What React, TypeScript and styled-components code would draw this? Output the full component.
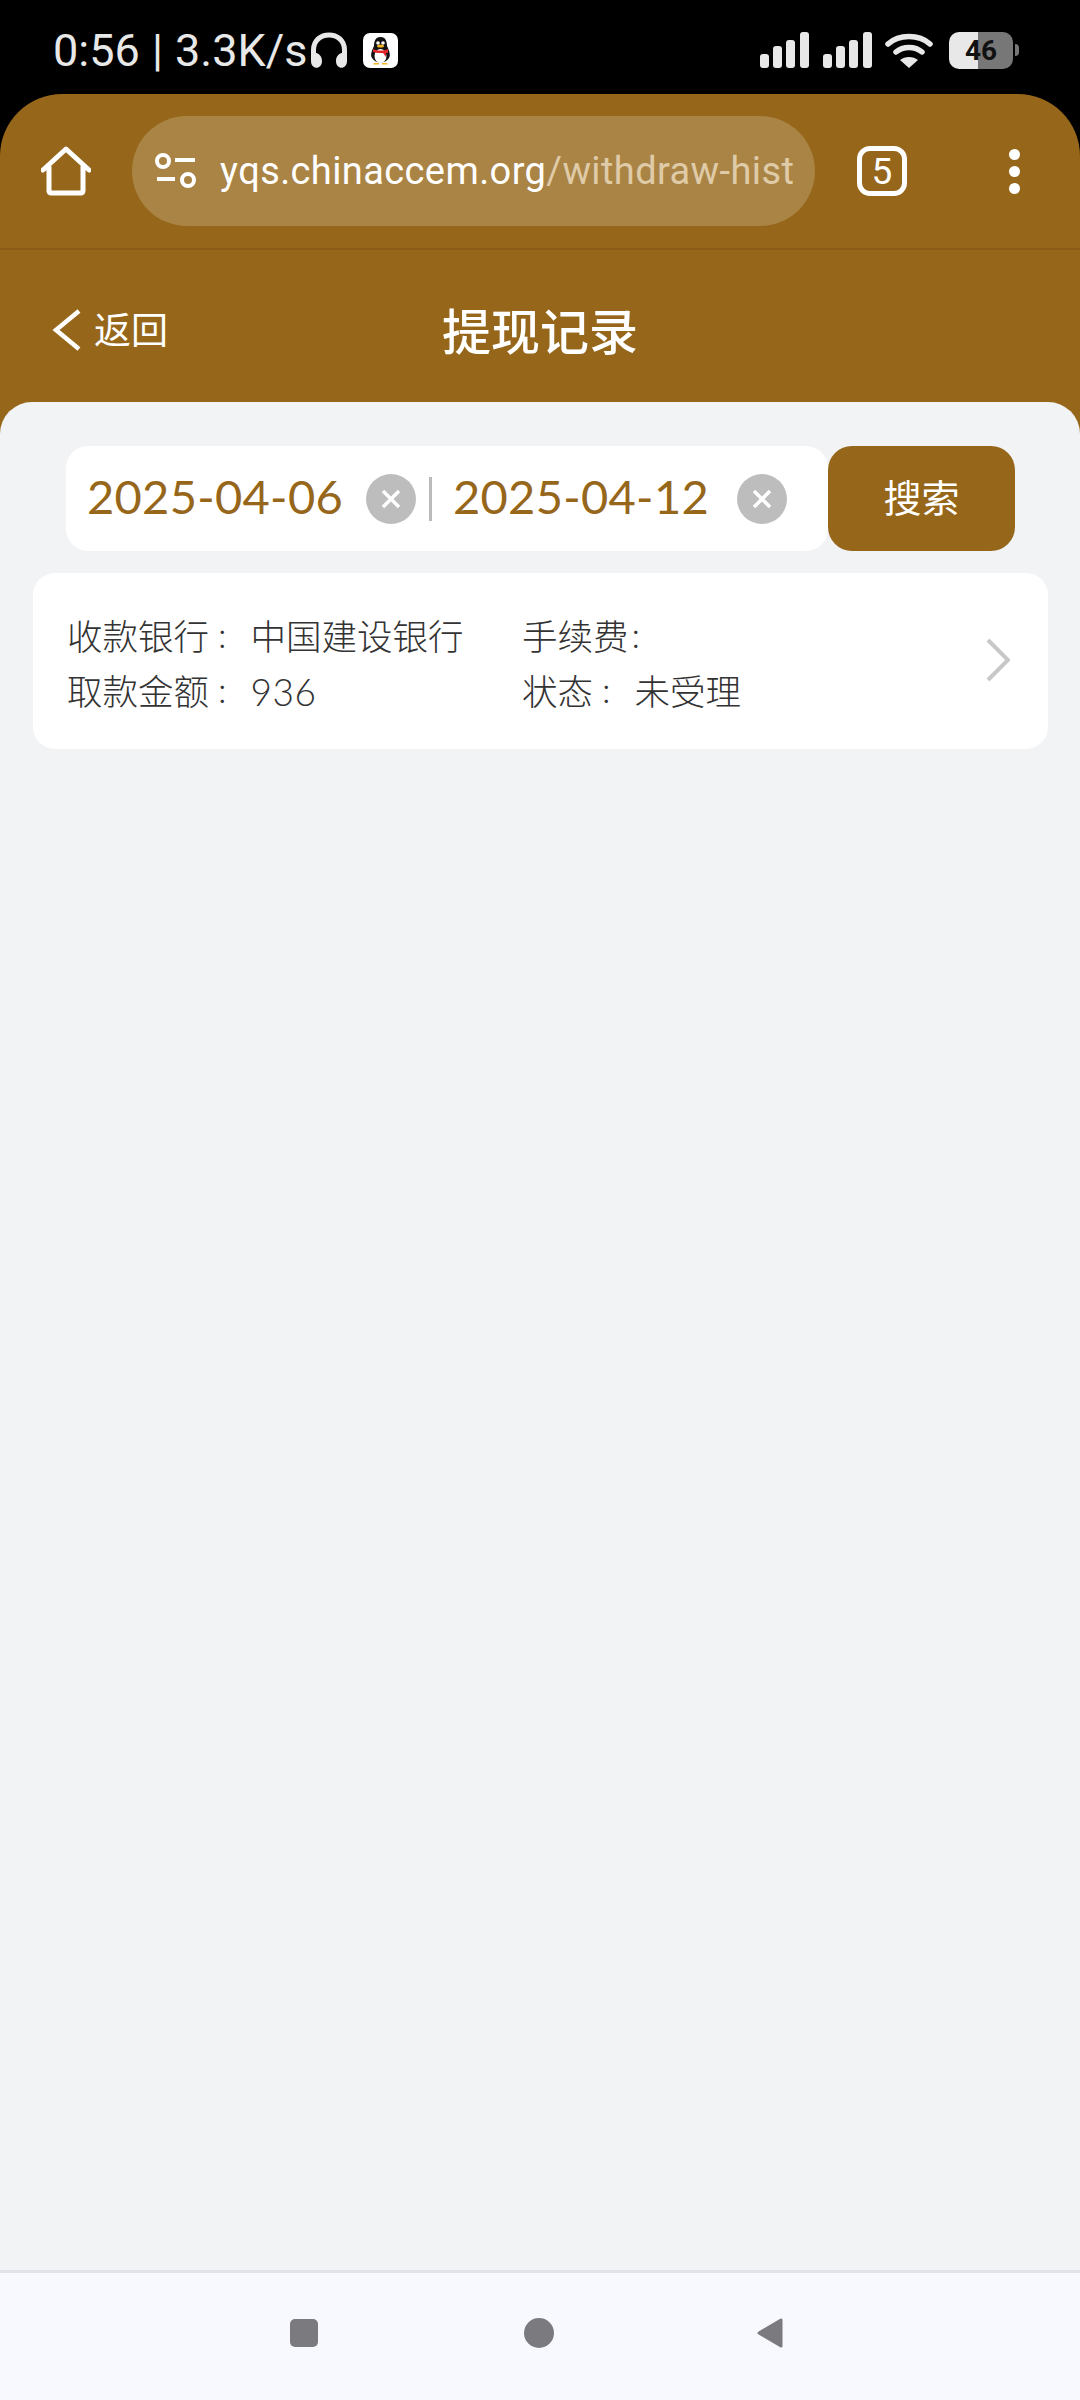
import React from "react";
import styled, { createGlobalStyle } from "styled-components";

const brown = "#96661a";
const latin = `Lato, "Noto Sans CJK SC", sans-serif`;

const GlobalStyle = createGlobalStyle`
  html, body { margin: 0; padding: 0; background: #000; }
  * { box-sizing: border-box; }
`;

const Screen = styled.div`
  width: 1080px;
  height: 2400px;
  display: flex;
  flex-direction: column;
  background: #000;
  overflow: hidden;
  font-family: ${latin};
`;

const StatusBar = styled.div`
  height: 94px;
  flex: none;
  display: flex;
  align-items: center;
  padding: 6px 61px 0 53px;
  color: #e8e8e8;
`;

const StatusText = styled.span`
  font-family: Roboto, sans-serif;
  font-size: 45px;
  line-height: 1;
  word-spacing: 1px;
`;

const StatusLeft = styled.div`
  display: flex;
  align-items: center;
  gap: 2px;
  flex: 1;
`;

const StatusRight = styled.div`
  display: flex;
  align-items: center;
`;

const QQBadge = styled.svg`
  margin-left: 13px;
`;

const Battery = styled.div`
  margin-left: 16px;
  width: 64px;
  height: 37px;
  border-radius: 10px;
  overflow: hidden;
  background: linear-gradient(90deg, #e8e8e8 0 29px, #777 29px 64px);
  color: #111;
  font: 700 28px/37px Roboto, sans-serif;
  text-align: center;
`;

const BatteryTip = styled.div`
  width: 4px;
  height: 12px;
  margin-left: 2px;
  border-radius: 0 4px 4px 0;
  background: #777;
`;

const Browser = styled.div`
  flex: 1;
  display: flex;
  flex-direction: column;
  background: ${brown};
  border-radius: 62px 62px 0 0;
  overflow: hidden;
`;

const ToolBar = styled.div`
  height: 156px;
  flex: none;
  display: flex;
  align-items: center;
  padding: 0 52px 0 41px;
  border-bottom: 2px solid #8a5c15;
`;

const UrlPill = styled.div`
  width: 683px;
  height: 110px;
  margin: 0 42px 0 41px;
  padding: 0 20px 0 23px;
  border-radius: 55px;
  background: #aa8445;
  display: flex;
  align-items: center;
  gap: 23px;
  white-space: nowrap;
  font-family: Roboto, sans-serif;
  font-size: 38px;
  letter-spacing: 0.4px;
  color: #fff;
`;

const UrlPath = styled.span`
  color: #dfcba8;
`;

const TabCount = styled.div`
  width: 50px;
  height: 50px;
  border: 5px solid #fff;
  border-radius: 13px;
  color: #fff;
  display: flex;
  align-items: center;
  justify-content: center;
  font: 400 37px/1 Roboto, sans-serif;
`;

const MoreDots = styled.div`
  margin-left: auto;
  display: flex;
  flex-direction: column;
  gap: 6px;
  margin-right: 8px;
`;

const Dot = styled.span`
  width: 11px;
  height: 11px;
  border-radius: 50%;
  background: #fff;
`;

const PageHeader = styled.div`
  height: 152px;
  flex: none;
  position: relative;
  display: flex;
  align-items: center;
  justify-content: center;
  color: #fff;
  padding-top: 10px;
`;

const BackLink = styled.div`
  position: absolute;
  left: 52px;
  top: 59px;
  display: flex;
  align-items: center;
  gap: 12px;
  font-size: 37px;
  line-height: 42px;
`;

const Title = styled.h1`
  margin: 0;
  font-size: 49px;
  font-weight: 500;
  line-height: 60px;
`;

const Content = styled.div`
  flex: 1;
  background: #f2f3f5;
  border-radius: 32px 32px 0 0;
  padding-top: 44px;
`;

const SearchRow = styled.div`
  display: flex;
  height: 105px;
  margin: 0 66px;
`;

const DateBox = styled.div`
  width: 762px;
  flex: none;
  display: flex;
  align-items: center;
  background: #fff;
  border-radius: 22px;
  padding-left: 21px;
`;

const DateText = styled.span<{ $width: number }>`
  width: ${(p) => p.$width}px;
  padding-bottom: 6px;
  color: ${brown};
  font-size: 47px;
  letter-spacing: 0.3px;
  white-space: nowrap;
`;

const ClearButton = styled.span`
  width: 50px;
  height: 50px;
  flex: none;
  border-radius: 50%;
  background: #bdbdbd;
  display: flex;
  align-items: center;
  justify-content: center;
`;

const Divider = styled.span`
  width: 3px;
  height: 44px;
  margin: 0 21px 0 13px;
  background: #bbb;
`;

const SearchButton = styled.div`
  width: 187px;
  flex: none;
  padding-bottom: 6px;
  background: ${brown};
  border-radius: 24px;
  color: #fff;
  font-size: 38px;
  display: flex;
  align-items: center;
  justify-content: center;
`;

const RecordCard = styled.div`
  margin: 22px 32px 0 33px;
  height: 176px;
  padding: 34px 38px 0 34px;
  background: #fff;
  border-radius: 22px;
  display: flex;
  align-items: flex-start;
`;

const Fields = styled.div`
  flex: 1;
  display: grid;
  grid-template-columns: 455px 1fr;
  grid-auto-rows: 55px;
  font-size: 35.5px;
  font-weight: 300;
  color: #333;
`;

const Field = styled.div`
  display: flex;
  align-items: center;
  white-space: nowrap;
`;

const FieldLabel = styled.span``;

const FieldColon = styled.span<{ $tight?: boolean }>`
  margin-left: ${(p) => (p.$tight ? 3 : 9)}px;
`;

const FieldValue = styled.span`
  margin-left: 24px;
`;

const FieldNumber = styled(FieldValue)`
  padding-top: 3px;
  font-size: 37px;
  letter-spacing: 0.5px;
`;

const Chevron = styled.svg`
  margin-top: 31px;
`;

const NavBar = styled.div`
  height: 130px;
  flex: none;
  background: #f8f9fe;
  border-top: 3px solid #e2e3e8;
  display: flex;
  align-items: center;
  justify-content: center;
  gap: 206px;
  padding: 0 7px 8px 0;
`;

const NavSquare = styled.div`
  width: 28px;
  height: 28px;
  border-radius: 5px;
  background: #7b7b7f;
`;

const NavCircle = styled.div`
  width: 30px;
  height: 30px;
  border-radius: 50%;
  background: #7b7b7f;
`;

const NavBack = styled.svg`
  margin-left: -3px;
`;

function ClearIcon() {
    return (
        <ClearButton>
            <svg width="22" height="22" viewBox="0 0 22 22">
                <path d="M3 3 L19 19 M19 3 L3 19" stroke="#fff" strokeWidth="3.5"/>
            </svg>
        </ClearButton>
    );
}

function SignalIcon({ left }: { left: number }) {
    return (
        <svg width="49" height="36" viewBox="0 0 49 36" style={{ marginLeft: left }} fill="#e8e8e8">
            <rect x="0" y="22" width="9" height="14" rx="3"/>
            <rect x="13" y="14" width="9" height="22" rx="3"/>
            <rect x="26" y="8" width="9" height="28" rx="3"/>
            <rect x="40" y="0" width="9" height="36" rx="3"/>
        </svg>
    );
}

function App() {
    return (
        <Screen>
            <GlobalStyle/>
            <StatusBar>
                <StatusLeft>
                    <StatusText>0:56 | 3.3K/s</StatusText>
                    <svg width="38" height="36" viewBox="0 0 38 36">
                        <path d="M3.5 25 V18 C3.5 -2 34.5 -2 34.5 18 V25" fill="none" stroke="#e8e8e8" strokeWidth="5"/>
                        <path d="M1 21 C7 19 12 23 12 29 C12 38 1 38 1 29 Z M37 21 C31 19 26 23 26 29 C26 38 37 38 37 29 Z" fill="#e8e8e8"/>
                    </svg>
                    <QQBadge width="35" height="35" viewBox="0 0 35 35">
                        <rect width="35" height="35" rx="7" fill="#fff"/>
                        <path d="M17.5 4 C12 4 11 9 11 13 C9 17 7 22 9 25 C13 31 22 31 26 25 C28 22 26 17 24 13 C24 9 23 4 17.5 4 Z" fill="#111"/>
                        <ellipse cx="17.5" cy="23" rx="6" ry="7" fill="#fff"/>
                        <circle cx="15" cy="10" r="1.8" fill="#fff"/>
                        <circle cx="20" cy="10" r="1.8" fill="#fff"/>
                        <ellipse cx="17.5" cy="13" rx="3.5" ry="1.6" fill="#f5b51e"/>
                        <path d="M10 16 C14 18 21 18 25 16 L25 20 L23 20 L23 24 L20 20 C16 20 13 20 10 19 Z" fill="#e5242a"/>
                        <path d="M11 30 H16 V31.5 H10 Z M19 30 H24 L25 31.5 H19 Z" fill="#f5b51e"/>
                    </QQBadge>
                </StatusLeft>
                <StatusRight>
                    <SignalIcon left={0}/>
                    <SignalIcon left={14}/>
                    <svg width="48" height="36" viewBox="0 0 48 36" style={{ marginLeft: 13 }}>
                        <path d="M3 12 C14 2 34 2 45 12 M11 20 C18 14 30 14 37 20" fill="none" stroke="#e8e8e8" strokeWidth="5.5" strokeLinecap="round"/>
                        <path d="M24 36 L15 28 C20 24 28 24 33 28 Z" fill="#e8e8e8"/>
                    </svg>
                    <Battery>46</Battery>
                    <BatteryTip/>
                </StatusRight>
            </StatusBar>
            <Browser>
                <ToolBar>
                    <svg width="50" height="50" viewBox="0 0 50 50">
                        <path d="M2 24 L25 3 L48 24 M8 21 V45 A2 2 0 0 0 10 47 H40 A2 2 0 0 0 42 45 V21" fill="none" stroke="#fff" strokeWidth="5" strokeLinecap="round" strokeLinejoin="round"/>
                    </svg>
                    <UrlPill>
                        <svg width="42" height="36" viewBox="0 0 42 36">
                            <circle cx="8" cy="8" r="6" fill="none" stroke="#fff" strokeWidth="4"/>
                            <path d="M20 7 H40 M2 26 H20" stroke="#fff" strokeWidth="4"/>
                            <circle cx="33" cy="27" r="6" fill="none" stroke="#fff" strokeWidth="4"/>
                        </svg>
                        <span>yqs.chinaccem.org<UrlPath>/withdraw-hist</UrlPath></span>
                    </UrlPill>
                    <TabCount>5</TabCount>
                    <MoreDots><Dot/><Dot/><Dot/></MoreDots>
                </ToolBar>
                <PageHeader>
                    <BackLink>
                        <svg width="30" height="42" viewBox="0 0 30 42">
                            <path d="M27 2 L4 21 L27 40" fill="none" stroke="#fff" strokeWidth="4.5"/>
                        </svg>
                        返回
                    </BackLink>
                    <Title>提现记录</Title>
                </PageHeader>
                <Content>
                    <SearchRow>
                        <DateBox>
                            <DateText $width={279}>2025-04-06</DateText>
                            <ClearIcon/>
                            <Divider/>
                            <DateText $width={284}>2025-04-12</DateText>
                            <ClearIcon/>
                        </DateBox>
                        <SearchButton>搜索</SearchButton>
                    </SearchRow>
                    <RecordCard>
                        <Fields>
                            <Field>
                                <FieldLabel>收款银行</FieldLabel><FieldColon>:</FieldColon>
                                <FieldValue>中国建设银行</FieldValue>
                            </Field>
                            <Field>
                                <FieldLabel>手续费</FieldLabel><FieldColon $tight>:</FieldColon>
                            </Field>
                            <Field>
                                <FieldLabel>取款金额</FieldLabel><FieldColon>:</FieldColon>
                                <FieldNumber>936</FieldNumber>
                            </Field>
                            <Field>
                                <FieldLabel>状态</FieldLabel><FieldColon>:</FieldColon>
                                <FieldValue>未受理</FieldValue>
                            </Field>
                        </Fields>
                        <Chevron width="24" height="44" viewBox="0 0 24 44">
                            <path d="M2 2 L22 22 L2 42" fill="none" stroke="#c8c8c8" strokeWidth="4"/>
                        </Chevron>
                    </RecordCard>
                </Content>
                <NavBar>
                    <NavSquare/>
                    <NavCircle/>
                    <NavBack width="26" height="30" viewBox="0 0 26 30">
                        <path d="M24 2 V28 L2 15 Z" fill="#7b7b7f" stroke="#7b7b7f" strokeWidth="3" strokeLinejoin="round"/>
                    </NavBack>
                </NavBar>
            </Browser>
        </Screen>
    );
}

export default App;
